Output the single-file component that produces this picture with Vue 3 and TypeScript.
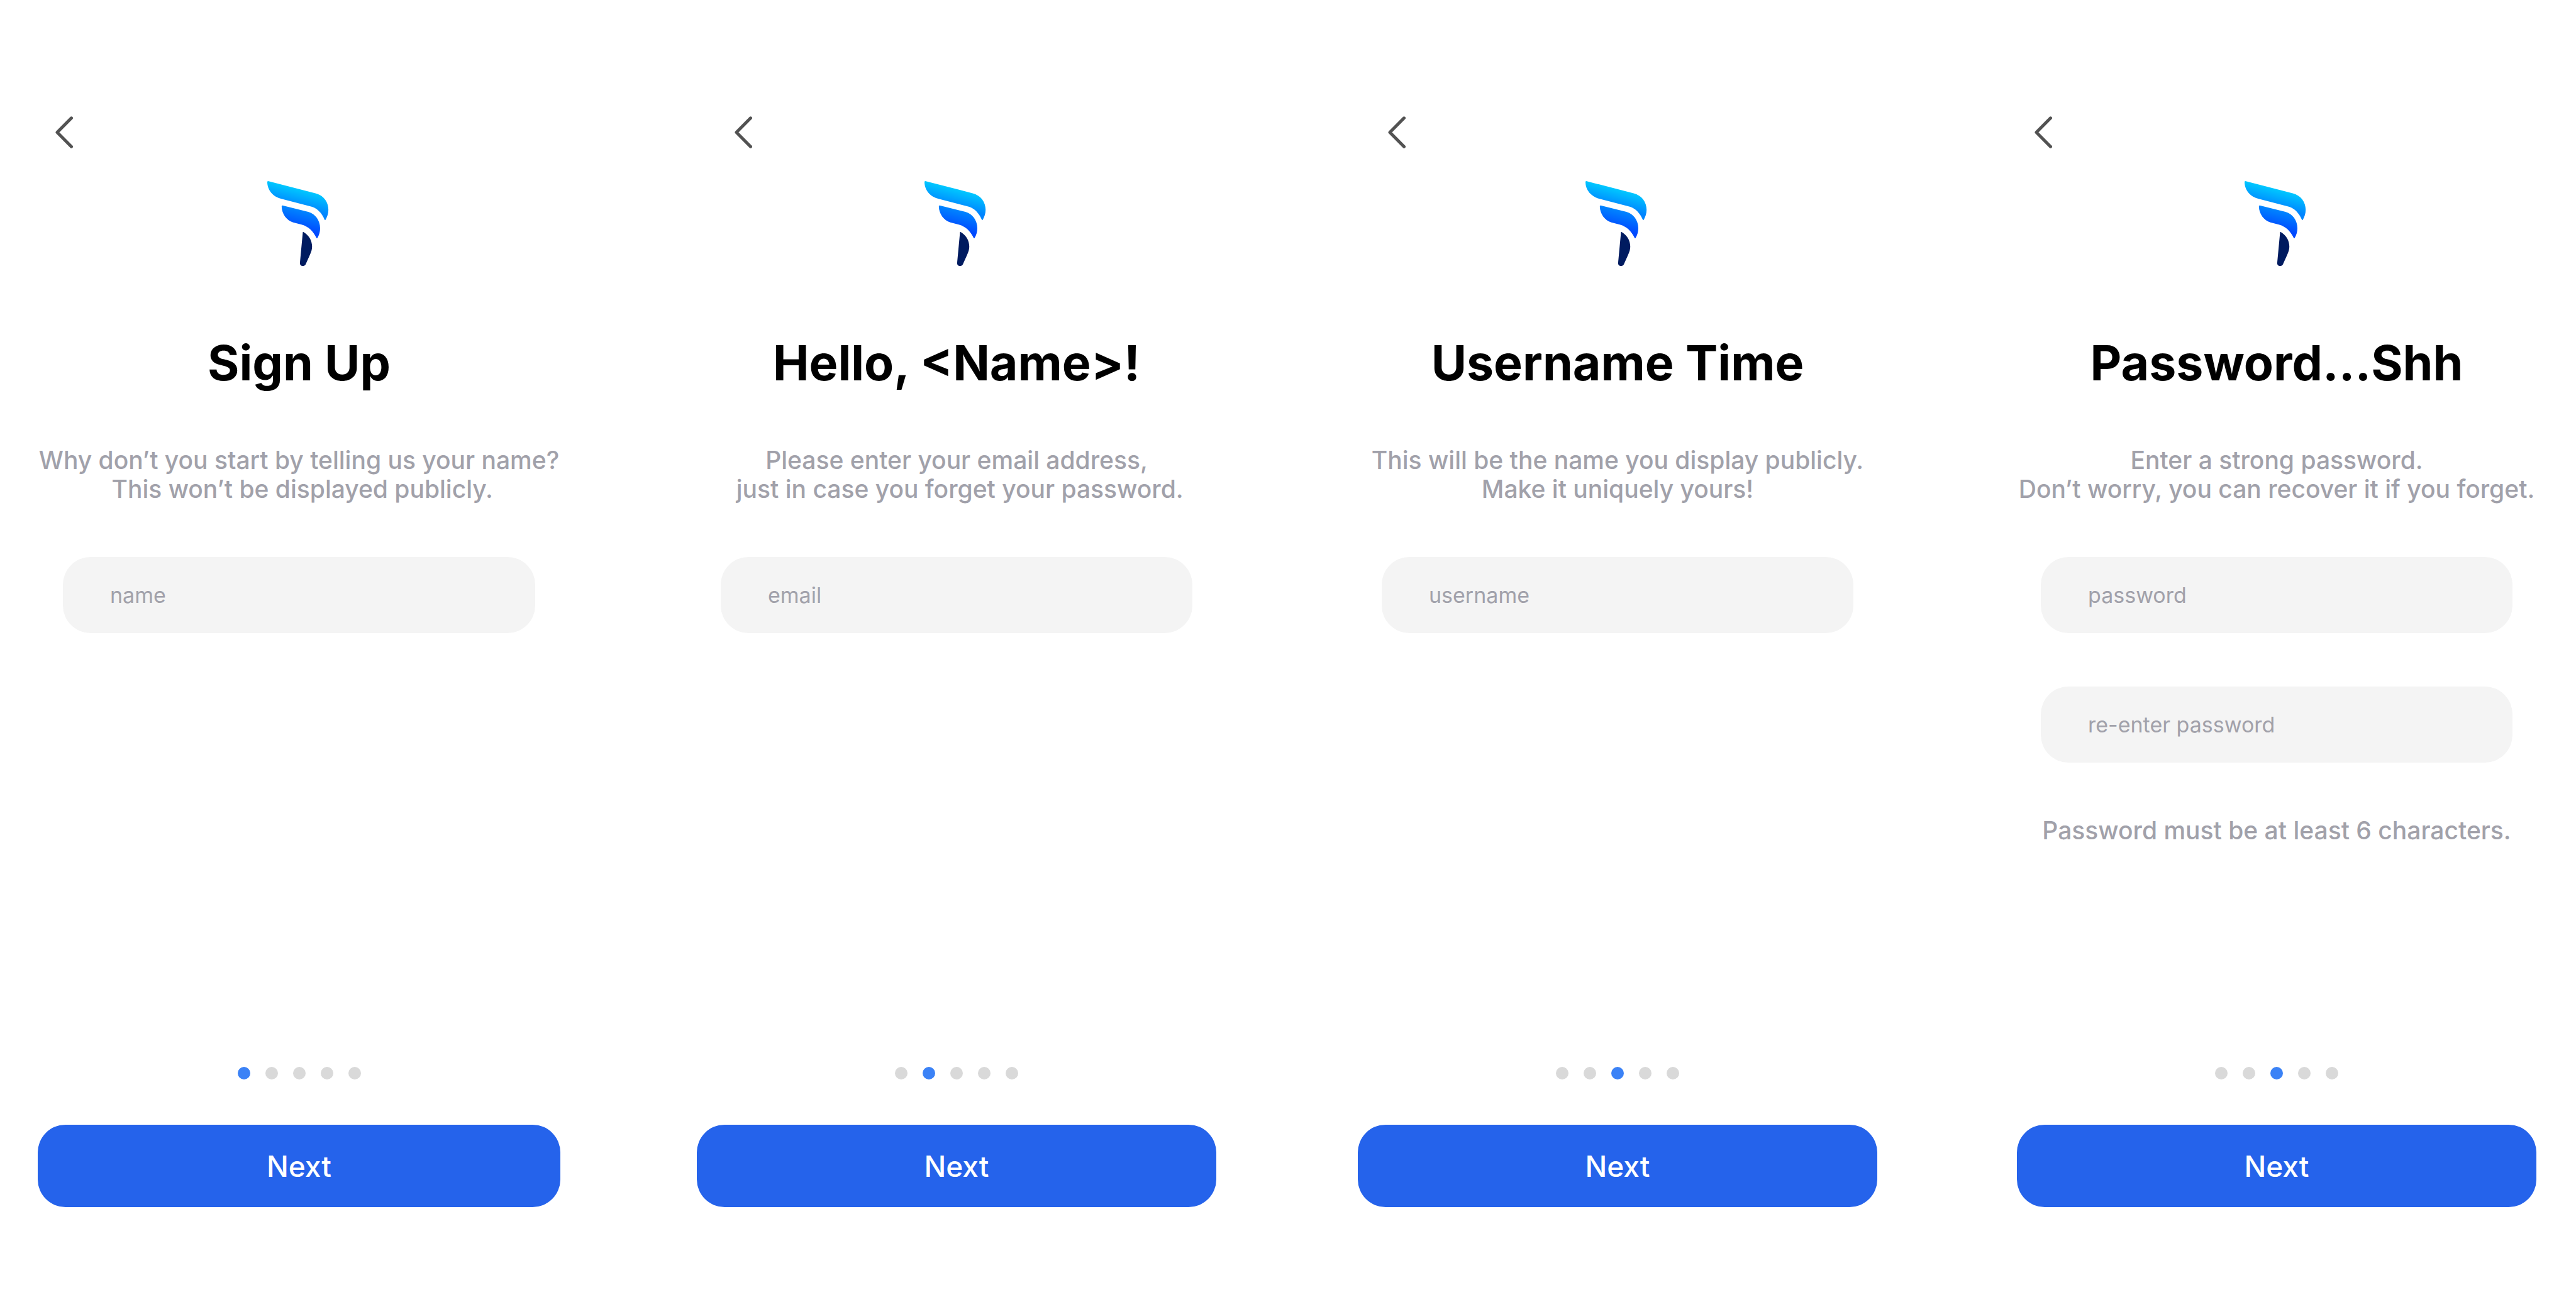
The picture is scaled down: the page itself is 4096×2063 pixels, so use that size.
<script setup lang="ts">
interface Field {
  id: string
  type: 'text' | 'email' | 'password'
  placeholder: string
}

interface Screen {
  key: string
  title: string
  lines: string[]
  fields: Field[]
  note?: string
  step: number
}

const stepCount = 5

const screens: Screen[] = [
  {
    key: 'name',
    title: 'Sign Up',
    lines: ['Why don’t you start by telling us your name?', '\u00a0This won’t be displayed publicly.'],
    fields: [{ id: 'name', type: 'text', placeholder: 'name' }],
    step: 1,
  },
  {
    key: 'email',
    title: 'Hello, <Name>!',
    lines: ['Please enter your email address,', '\u00a0just in case you forget your password.'],
    fields: [{ id: 'email', type: 'email', placeholder: 'email' }],
    step: 2,
  },
  {
    key: 'username',
    title: 'Username Time',
    lines: ['This will be the name you display publicly.', 'Make it uniquely yours!'],
    fields: [{ id: 'username', type: 'text', placeholder: 'username' }],
    step: 3,
  },
  {
    key: 'password',
    title: 'Password...Shh',
    lines: ['Enter a strong password.', 'Don’t worry, you can recover it if you forget.'],
    fields: [
      { id: 'password', type: 'password', placeholder: 'password' },
      { id: 'password-repeat', type: 'password', placeholder: 're-enter password' },
    ],
    note: 'Password must be at least 6 characters.',
    step: 3,
  },
]
</script>

<template>
  <main class="board">
    <form
      v-for="screen in screens"
      :key="screen.key"
      class="screen"
      :class="`screen--${screen.key}`"
      @submit.prevent
    >
      <button type="button" class="back" aria-label="Back">
        <svg class="back-icon" viewBox="0 0 28 51" aria-hidden="true">
          <path d="M25.5 2.8 L3 25.5 L25.5 48.2" />
        </svg>
      </button>

      <svg class="logo" viewBox="92 76 527 697" aria-hidden="true">
        <defs>
          <linearGradient :id="`${screen.key}-wing`" gradientUnits="userSpaceOnUse" x1="372" y1="145" x2="335" y2="290">
            <stop offset="0" stop-color="#00c8ff" />
            <stop offset="1" stop-color="#0085ff" />
          </linearGradient>
          <linearGradient :id="`${screen.key}-feather`" gradientUnits="userSpaceOnUse" x1="385" y1="310" x2="345" y2="470">
            <stop offset="0" stop-color="#0088ff" />
            <stop offset="1" stop-color="#0048ff" />
          </linearGradient>
        </defs>
        <path
          :fill="`url(#${screen.key}-wing)`"
          d="M98 76 L488 176 C553 192 594 247 594 312 C594 341 585 368 571 393 Q567 400 563 393 C540 341 504 299 456 286 L208 222 C142 207 92 152 92 84 Q92 76 98 76 Z"
        />
        <path
          :fill="`url(#${screen.key}-feather)`"
          d="M216 276 L429 329 C485 343 526 399 526 463 C526 491 519 519 504 543 Q500 549 496 543 C470 488 432 449 374 433 L304 415 C253 402 210 345 210 284 Q210 276 216 276 Z"
        />
        <path
          fill="#001b60"
          d="M384 496 Q386 491 391 495 C432 519 460 562 460 615 C460 638 453 659 443 680 L410 754 C405 767 396 774 385 774 C370 774 360 765 360 750 Z"
        />
      </svg>

      <h1 class="title">{{ screen.title }}</h1>

      <p class="text">
        <span v-for="line in screen.lines" :key="line" class="line">{{ line }}</span>
      </p>

      <div class="fields">
        <input
          v-for="field in screen.fields"
          :id="field.id"
          :key="field.id"
          class="field"
          :type="field.type"
          :name="field.id"
          :placeholder="field.placeholder"
          :aria-label="field.placeholder"
        />
      </div>

      <p v-if="screen.note" class="text note">{{ screen.note }}</p>

      <footer class="footer">
        <div class="dots" aria-hidden="true">
          <span
            v-for="n in stepCount"
            :key="n"
            class="dot"
            :class="{ 'dot--active': n === screen.step }"
          ></span>
        </div>
        <button type="submit" class="next">Next</button>
      </footer>
    </form>
  </main>
</template>

<style>
body {
  background: #fff;
}
</style>

<style scoped>
.board {
  box-sizing: border-box;
  display: grid;
  grid-template-columns: 831fr 217fr 826fr 225fr 826fr 222fr 826fr;
  min-height: 100vh;
  padding: 185px 63px 143px 60px;
  font-family: Inter, 'Liberation Sans', sans-serif;
}

.screen {
  display: flex;
  flex-direction: column;
  align-items: center;
  min-width: 0;
}

.screen--name {
  grid-column: 1;
}

.screen--email {
  grid-column: 3;
}

.screen--username {
  grid-column: 5;
}

.screen--password {
  grid-column: 7;
}

.back {
  align-self: flex-start;
  margin: 0 0 52px 28px;
  padding: 0;
  border: 0;
  background: none;
  cursor: pointer;
}

.screen--email .back {
  margin-left: 60px;
}

.screen--username .back {
  margin-left: 48px;
}

.back-icon {
  display: block;
  width: 28px;
  height: 51px;
  fill: none;
  stroke: #525252;
  stroke-width: 5;
  stroke-linecap: round;
  stroke-linejoin: round;
}

.logo {
  display: block;
  width: 102px;
  height: 135px;
}

.title {
  margin: 107px 0 85px;
  color: #000;
  font-size: 77px;
  font-weight: 700;
  line-height: 94px;
  white-space: nowrap;
}

.text {
  margin: 0;
  color: #a1a1aa;
  font-size: 39px;
  font-weight: 500;
  line-height: 46px;
  text-align: center;
  white-space: nowrap;
}

.line {
  display: block;
}

.fields {
  display: flex;
  flex-direction: column;
  gap: 85px;
  align-self: stretch;
  margin: 85px 38px 0;
}

.screen--name .fields {
  margin-right: 40px;
  margin-left: 40px;
}

.field {
  box-sizing: border-box;
  width: 100%;
  height: 121px;
  padding: 0 75px;
  border: 0;
  border-radius: 44px;
  outline: 0;
  background: #f4f4f4;
  color: #000;
  font-family: inherit;
  font-size: 34px;
}

.field::placeholder {
  color: #a1a1aa;
  opacity: 1;
}

.note {
  margin-top: 85px;
}

.footer {
  display: flex;
  flex-direction: column;
  align-items: center;
  align-self: stretch;
  gap: 72px;
  margin-top: auto;
}

.dots {
  display: flex;
  gap: 24px;
}

.dot {
  width: 20px;
  height: 20px;
  border-radius: 50%;
  background: #d9d9d9;
}

.dot--active {
  background: #3b82f6;
}

.next {
  width: 100%;
  height: 131px;
  padding: 0;
  border: 0;
  border-radius: 44px;
  background: #2563eb;
  color: #fff;
  font-family: inherit;
  font-size: 46px;
  font-weight: 500;
  cursor: pointer;
}
</style>
